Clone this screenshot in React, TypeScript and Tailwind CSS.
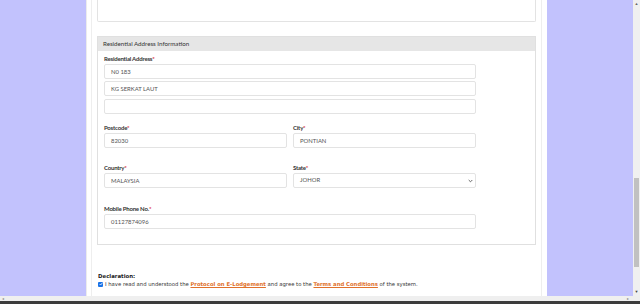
import React from 'react';

const font = { fontFamily: 'Lato, "Open Sans", sans-serif' };

function Label({ text }: { text: string }) {
  return (
    <div className="h-[8px] mb-[1px] text-[6px] leading-[8px] font-bold tracking-[-0.2px] text-[#333]">
      {text}
      <span className="text-[#d9232d]">*</span>
    </div>
  );
}

function Input({ value, className = '' }: { value?: string; className?: string }) {
  return (
    <div className={`h-[15px] border border-[#e3e3e3] rounded-[2px] bg-white pl-[6px] text-[5.9px] leading-[13px] text-[#555] ${className}`}>
      {value}
    </div>
  );
}

export default function App() {
  return (
    <div className="w-[640px] h-[304px] overflow-hidden flex flex-col bg-white" style={font}>
      <div className="flex h-[296px]">
        <div className="w-[86px] bg-[#c2c2fd]" />
        <div className="w-[461px] bg-white border-l border-[#ececec] pl-[4px] pr-[5px]">
          <div className="h-full border-x border-[#eeeeee] px-[5px]">
            <div className="h-[22px] border border-t-0 border-[#e3e3e3] rounded-b-[2px]" />
            <div className="mt-[14px] border border-[#e0e0e0]">
              <div className="h-[14px] bg-[#e6e6e6] pl-[5px] text-[6.2px] leading-[14px] text-[#333]">
                Residential Address Information
              </div>
              <div className="px-[6px] pt-[4px] pb-[15px]">
                <Label text="Residential Address" />
                <div className="w-[372px] flex flex-col gap-[2px]">
                  <Input value="N0 183" />
                  <Input value="KG SERKAT LAUT" />
                  <Input className="mt-[1px]" />
                </div>
                <div className="w-[372px] grid grid-cols-2 gap-x-[6px] mt-[10px]">
                  <div>
                    <Label text="Postcode" />
                    <Input value="82030" />
                  </div>
                  <div>
                    <Label text="City" />
                    <Input value="PONTIAN" />
                  </div>
                </div>
                <div className="w-[372px] grid grid-cols-2 gap-x-[6px] mt-[16px]">
                  <div>
                    <Label text="Country" />
                    <Input value="MALAYSIA" />
                  </div>
                  <div>
                    <Label text="State" />
                    <div className="h-[15px] border border-[#e3e3e3] rounded-[2px] bg-white pl-[6px] pr-[2px] flex items-center justify-between text-[5.9px] text-[#555]">
                      <span>JOHOR</span>
                      <svg width="5" height="4" viewBox="0 0 5 4">
                        <path d="M0.7 1 L2.5 2.8 L4.3 1" fill="none" stroke="#555" strokeWidth="0.9" />
                      </svg>
                    </div>
                  </div>
                </div>
                <div className="w-[372px] mt-[17px]">
                  <Label text="Mobile Phone No." />
                  <Input value="01127874096" />
                </div>
              </div>
            </div>
            <div className="mt-[27px] pl-[1px]" style={{ fontFamily: '"DejaVu Sans", Verdana, sans-serif' }}>
              <div className="text-[5.4px] leading-[8px] font-bold text-[#222]">Declaration:</div>
              <div className="flex items-center gap-[2px] text-[5.3px] leading-[8px] text-[#333]">
                <span className="w-[5px] h-[5px] rounded-[1px] bg-[#1a73e8] flex items-center justify-center">
                  <svg width="4" height="4" viewBox="0 0 4 4">
                    <path d="M0.6 2 L1.6 3 L3.4 0.9" fill="none" stroke="#fff" strokeWidth="0.8" />
                  </svg>
                </span>
                <span>
                  I have read and understood the{' '}
                  <span className="font-bold underline text-[#e0712b]">Protocol on E-Lodgement</span> and agree to the{' '}
                  <span className="font-bold underline text-[#e0712b]">Terms and Conditions</span> of the system.
                </span>
              </div>
            </div>
          </div>
        </div>
        <div className="w-[86px] bg-[#c2c2fd]" />
        <div className="w-[7px] bg-[#f0f0f0] flex flex-col items-center">
          <div className="h-[8px] flex items-center text-[4px] text-[#666]">▲</div>
          <div className="h-[170px]" />
          <div className="w-[5px] h-[89px] bg-[#c1c1c1]" />
          <div className="flex-1" />
          <div className="h-[8px] flex items-center text-[4px] text-[#444]">▼</div>
        </div>
      </div>
      <div className="h-[5px] bg-[#efefef] flex items-center justify-between px-[2px] text-[4px] text-[#888]">
        <span>◂</span>
        <span className="mr-[9px]">▸</span>
      </div>
      <div className="h-[3px] bg-[#3c3c3c]" />
    </div>
  );
}
